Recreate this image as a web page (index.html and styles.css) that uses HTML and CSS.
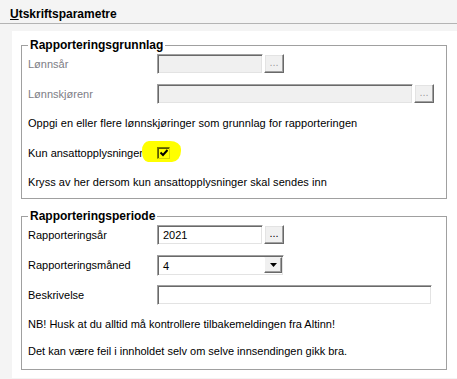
FILE: index.html
```html
<!DOCTYPE html>
<html lang="no">

<head>
  <meta charset="UTF-8">
  <meta name="viewport" content="width=device-width, initial-scale=1.0">
  <title>Utskriftsparametre</title>
  <link rel="stylesheet" href="styles.css">
</head>

<body>
  <div class="header">
    <span class="title"><u>U</u>tskriftsparametre</span>
  </div>
  <div class="panel">
    <fieldset class="group">
      <legend>Rapporteringsgrunnlag</legend>
      <div class="rows">
        <div class="row">
          <span class="label disabled">Lønnsår</span>
          <span class="field short disabled"></span>
          <span class="lookup disabled">...</span>
        </div>
        <div class="row">
          <span class="label disabled">Lønnskjørenr</span>
          <span class="field long disabled"></span>
          <span class="lookup disabled">...</span>
        </div>
        <div class="note">Oppgi en eller flere lønnskjøringer som grunnlag for rapporteringen</div>
        <div class="row">
          <span class="label">Kun ansattopplysninger</span>
          <span class="check-cell">
            <span class="marker"></span>
            <span class="checkbox">
              <svg width="8" height="8" viewBox="0 0 8 8"><path d="M0.5 3.5 L3 6 L7.5 1" fill="none" stroke="#000" stroke-width="2"/></svg>
            </span>
          </span>
        </div>
        <div class="note">Kryss av her dersom kun ansattopplysninger skal sendes inn</div>
      </div>
    </fieldset>

    <fieldset class="group">
      <legend>Rapporteringsperiode</legend>
      <div class="rows">
        <div class="row">
          <span class="label">Rapporteringsår</span>
          <span class="field short">2021</span>
          <span class="lookup">...</span>
        </div>
        <div class="row">
          <span class="label">Rapporteringsmåned</span>
          <span class="select">
            <span class="select-value">4</span>
            <span class="select-button">
              <svg width="7" height="4" viewBox="0 0 7 4"><polygon points="0,0 7,0 3.5,4" fill="#000"/></svg>
            </span>
          </span>
        </div>
        <div class="row">
          <span class="label">Beskrivelse</span>
          <span class="field wide"></span>
        </div>
        <div class="info">
          <p>NB! Husk at du alltid må kontrollere tilbakemeldingen fra Altinn!</p>
          <p>Det kan være feil i innholdet selv om selve innsendingen gikk bra.</p>
        </div>
      </div>
    </fieldset>
  </div>
</body>

</html>
```

FILE: styles.css
```css
body {
  margin: 0;
  background: #f4f4f4;
  font-family: 'Liberation Sans', Arial, sans-serif;
  font-size: 11px;
  color: #000;
}

.header {
  box-sizing: border-box;
  height: 24px;
  padding: 8px 0 0 10px;
  border-bottom: 1px solid #b4b4b4;
}

.title {
  font-size: 12px;
  font-weight: bold;
  line-height: 12px;
}

.panel {
  margin: 7px 0 0 12px;
  background: #fff;
  padding: 7px 10px 8px 9px;
}

.group {
  margin: 0;
  padding: 0 6px 6px 6px;
  border: 1px solid #a0a0a0;
  min-width: 0;
}

.group + .group {
  margin-top: 10px;
}

legend {
  padding: 0 2px;
  font-size: 12px;
  font-weight: bold;
  line-height: 14px;
}

.rows {
  display: flex;
  flex-direction: column;
  gap: 10px;
  padding-top: 2px;
}

.row {
  display: flex;
  align-items: center;
  height: 20px;
}

.note {
  height: 19px;
  line-height: 19px;
  letter-spacing: 0.05px;
}

.label {
  width: 129px;
  flex: none;
}

.label.disabled {
  color: #7d7d85;
}

.field {
  box-sizing: border-box;
  height: 20px;
  background: #fff;
  border: 1px solid;
  border-color: #a0a0a0 #fff #fff #a0a0a0;
  box-shadow: inset 1px 1px #696969, inset -1px -1px #e3e3e3;
  padding: 0 5px;
  line-height: 18px;
}

.field.disabled {
  background: #f0f0f0;
}

.field.short {
  width: 106px;
}

.field.long {
  width: 256px;
}

.field.wide {
  width: 275px;
}

.lookup {
  box-sizing: border-box;
  width: 20px;
  height: 19px;
  margin-left: 1px;
  align-self: flex-start;
  background: #f0f0f0;
  border: 1px solid;
  border-color: #fff #696969 #696969 #fff;
  box-shadow: inset -1px -1px #a0a0a0, inset 1px 1px #e3e3e3;
  text-align: center;
  line-height: 15px;
}

.lookup.disabled {
  color: #a0a0a0;
}

.check-cell {
  position: relative;
  width: 13px;
  height: 12px;
}

/* yellow marker drawn over the form by hand */
.marker {
  position: absolute;
  left: -15px;
  top: -6px;
  width: 39px;
  height: 21px;
  background: #ffff00;
  border-radius: 7px 11px 9px 6px / 9px 8px 11px 10px;
}

.checkbox {
  position: relative;
  display: flex;
  align-items: center;
  justify-content: center;
  box-sizing: border-box;
  width: 13px;
  height: 12px;
  border: 1px solid;
  border-color: #7a7a00 #d6d600 #d6d600 #7a7a00;
  box-shadow: inset 1px 1px #5a5a00;
}

.select {
  display: flex;
  box-sizing: border-box;
  width: 127px;
  height: 21px;
  background: #fff;
  border: 1px solid;
  border-color: #a0a0a0 #fff #fff #a0a0a0;
  box-shadow: inset 1px 1px #696969, inset -1px -1px #e3e3e3;
  padding: 1px 1px 2px 2px;
}

.select-value {
  flex: 1;
  padding-left: 3px;
  line-height: 18px;
}

.select-button {
  display: flex;
  align-items: center;
  justify-content: center;
  box-sizing: border-box;
  width: 18px;
  background: #f0f0f0;
  border: 1px solid;
  border-color: #f0f0f0 #696969 #696969 #fff;
  box-shadow: inset -1px -1px #a0a0a0;
}

.info {
  display: flex;
  flex-direction: column;
  gap: 13px;
  margin: 2px 0 5px;
}

.info p {
  margin: 0;
  line-height: 14px;
}
```
